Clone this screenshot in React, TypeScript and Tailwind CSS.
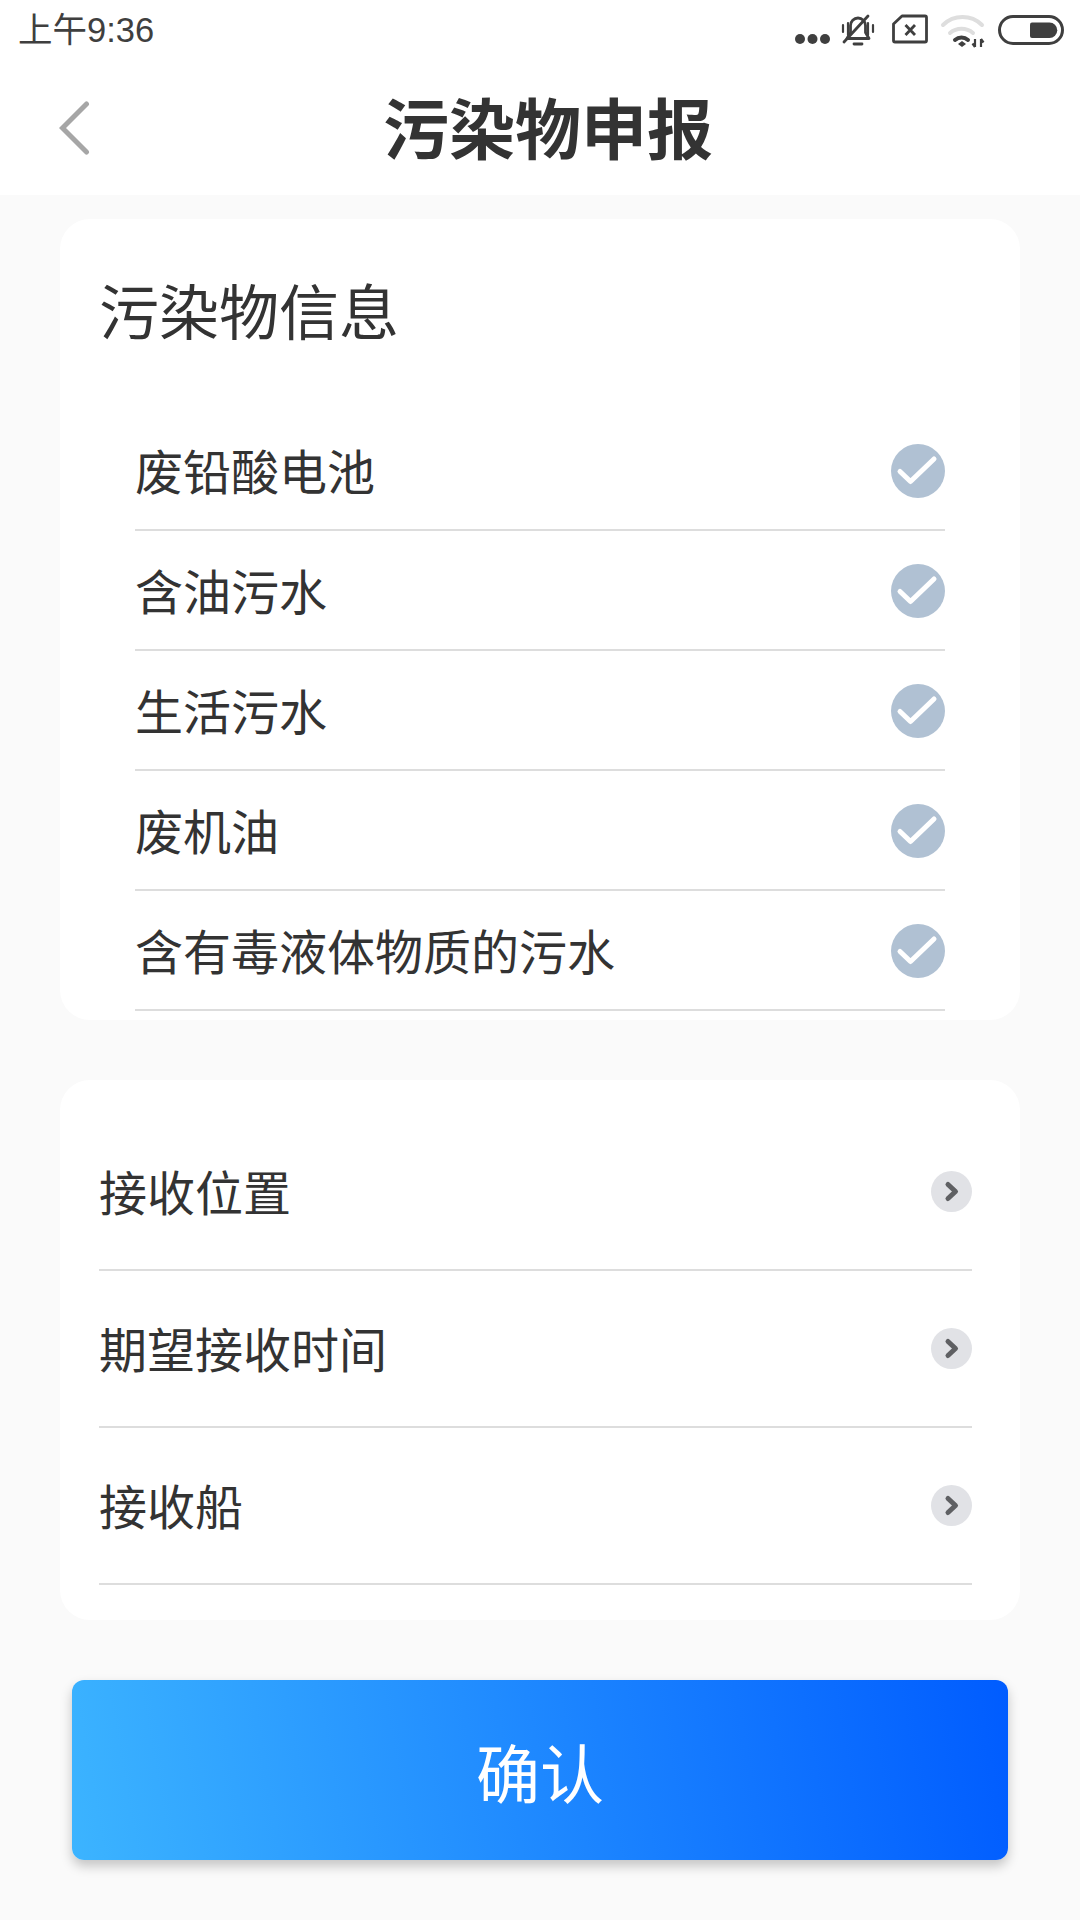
const pollutants = ["废铅酸电池", "含油污水", "生活污水", "废机油", "含有毒液体物质的污水"]
const receiveRows = ["接收位置", "期望接收时间", "接收船"]

// drawn in page coordinates, the viewBox starts where the icons start
function StatusIcons() {
  return (
    <svg width="280" height="60" viewBox="790 0 280 60" className="block">
      <circle cx="800" cy="39" r="5" fill="#3f3f3f" />
      <circle cx="812.500" cy="39" r="5" fill="#3f3f3f" />
      <circle cx="825" cy="39" r="5" fill="#3f3f3f" />
      <g fill="none" stroke="#3f3f3f" strokeLinecap="round">
        <path d="M847 38.500h22l-3.500-6v-7a7.500 7.500 0 0 0-15 0v7z" strokeWidth="2.800" strokeLinejoin="round" />
        <path d="M854 44h8" strokeWidth="2.800" />
        <path d="M868 16 L844 42" strokeWidth="2.800" />
        <path d="M843 25v7M848 23v12M868 23v12M873 25v7" strokeWidth="2.200" />
      </g>
      <path d="M902 16h23a1.500 1.500 0 0 1 1.500 1.500v23a1.500 1.500 0 0 1-1.500 1.500h-30a1.500 1.500 0 0 1-1.500-1.500V24z" fill="none" stroke="#3f3f3f" strokeWidth="2.800" strokeLinejoin="round" />
      <path d="M905.500 25l9.500 10M915 25l-9.500 10" fill="none" stroke="#3f3f3f" strokeWidth="2.800" />
      <path d="M943 25a28 28 0 0 1 39 0" fill="none" stroke="#dedede" strokeWidth="4" strokeLinecap="round" />
      <path d="M950 33a18 18 0 0 1 23 0" fill="none" stroke="#dedede" strokeWidth="4" strokeLinecap="round" />
      <path d="M955 40a10 10 0 0 1 13 0" fill="none" stroke="#3f3f3f" strokeWidth="4" strokeLinecap="round" />
      <path d="M958 44l4-3 4 3-4 3z" fill="#3f3f3f" />
      <path d="M975 39v8M972.500 43.500l2.500 3.500M981 47v-8M981 39l2.500 3.500" fill="none" stroke="#3f3f3f" strokeWidth="2.200" />
      <rect x="999.500" y="16.500" width="63" height="27" rx="13.500" fill="none" stroke="#3f3f3f" strokeWidth="3" />
      <path d="M1032 22.500h17.500a7.750 7.750 0 0 1 0 15.500H1032a2 2 0 0 1-2-2V24.500a2 2 0 0 1 2-2z" fill="#3f3f3f" />
    </svg>
  )
}

function CheckIcon() {
  return (
    <svg width="54" height="54" viewBox="0 0 54 54" className="block shrink-0 mt-[2px]">
      <circle cx="27" cy="27" r="27" fill="#b0c1d3" />
      <path d="M9 27.500L19.500 37.500L43 15" fill="none" stroke="#fff" strokeWidth="5" strokeLinecap="round" strokeLinejoin="round" />
    </svg>
  )
}

function ArrowIcon() {
  return (
    <svg width="41" height="41" viewBox="0 0 41 41" className="block shrink-0">
      <circle cx="20.500" cy="20.500" r="20.500" fill="#e1e2e6" />
      <path d="M17 13.500L24.500 20.500L17 27.500" fill="none" stroke="#5f6063" strokeWidth="5" strokeLinecap="round" strokeLinejoin="round" />
    </svg>
  )
}

export default function App() {
  return (
    <div className="w-[1080px] h-[1920px] overflow-hidden bg-[#fafafa] text-[#333333] font-['Noto_Sans_CJK_SC','Noto_Sans',sans-serif]">
      <div className="bg-white h-[195px]">
        <div className="h-[60px] pl-[18px] pr-[10px] flex items-center justify-between">
          <span className="text-[34.5px] leading-none text-[#3f3f3f] font-['Liberation_Sans','Noto_Sans_CJK_SC',sans-serif]">上午9:36</span>
          <StatusIcons />
        </div>
        <div className="h-[135px] relative flex items-center justify-center">
          <svg width="32" height="56" viewBox="0 0 32 56" className="absolute left-[59px] top-[41px]">
            <path d="M27.500 3L3.500 27l24 24" fill="none" stroke="#a6a6a6" strokeWidth="5" strokeLinecap="round" />
          </svg>
          <h1 className="text-[66px] leading-none font-bold text-[#333333] ml-[16px] -mt-[6px]">污染物申报</h1>
        </div>
      </div>

      <div className="mt-[24px] mx-[60px] h-[801px] bg-white rounded-[30px] overflow-hidden">
        <h2 className="h-[192px] pl-[39px] pt-[54px] text-[60px] leading-[72px]">污染物信息</h2>
        <div className="px-[75px]">
          {pollutants.map((name) => (
            <div key={name} className="h-[120px] border-b-2 border-[#dddddd] flex items-center justify-between">
              <span className="text-[48px] leading-none -mt-[2px]">{name}</span>
              <CheckIcon />
            </div>
          ))}
        </div>
      </div>

      <div className="mt-[60px] mx-[60px] h-[540px] bg-white rounded-[30px] pt-[34px] px-[39px] pr-[48px]">
        {receiveRows.map((name) => (
          <div key={name} className="h-[157px] border-b-2 border-[#dddddd] flex items-center justify-between">
            <span className="text-[48px] leading-none -mt-[4px]">{name}</span>
            <ArrowIcon />
          </div>
        ))}
      </div>

      <button className="mt-[60px] mx-[72px] block w-[936px] h-[180px] rounded-[12px] bg-[linear-gradient(80deg,#3cb4ff,#005cff)] shadow-[0_6px_12px_rgba(0,0,0,0.22)] text-white text-[64px] leading-none">
        确认
      </button>
    </div>
  )
}
